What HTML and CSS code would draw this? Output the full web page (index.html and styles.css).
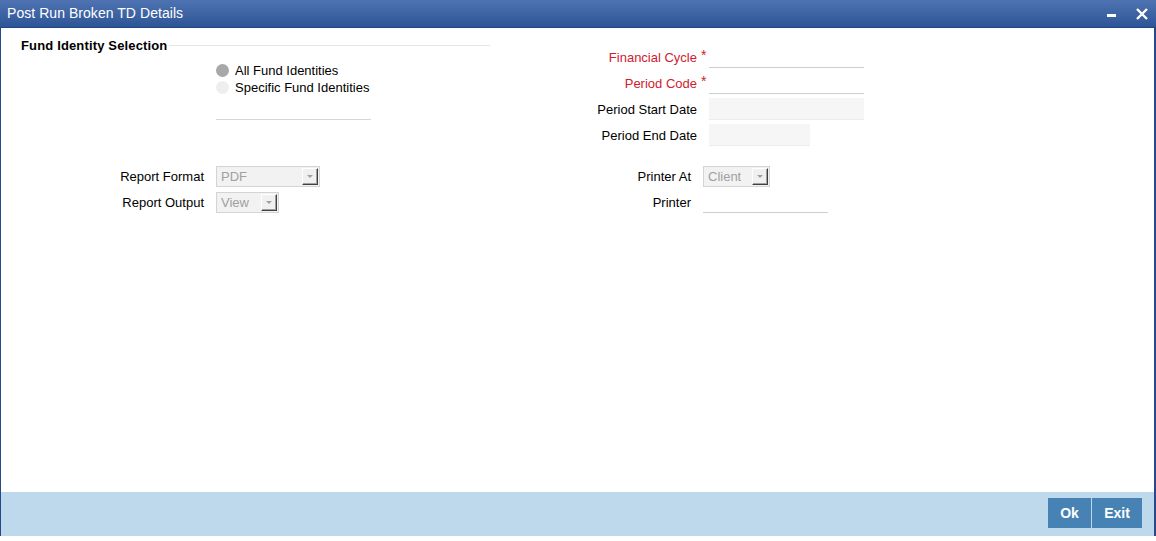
FILE: index.html
```html
<!DOCTYPE html>
<html>
<head>
<meta charset="utf-8">
<link rel="stylesheet" href="styles.css">
</head>
<body>
<div class="window">
  <div class="titlebar">
    <span class="title">Post Run Broken TD Details</span>
    <div class="controls">
      <svg class="ctl" width="12" height="12" viewBox="0 0 12 12"><rect x="1" y="6" width="9" height="3" fill="#fff"/></svg>
      <svg class="ctl" width="14" height="14" viewBox="0 0 14 14"><path d="M2 2 L12 12 M12 2 L2 12" stroke="#fff" stroke-width="2.4" fill="none"/></svg>
    </div>
  </div>
  <div class="content">
    <div class="top">
      <div class="left">
        <div class="legend-row">
          <span class="legend">Fund Identity Selection</span>
          <span class="legend-line"></span>
        </div>
        <div class="radios">
          <div class="radio-row"><span class="radio checked"></span><span>All Fund Identities</span></div>
          <div class="radio-row"><span class="radio"></span><span>Specific Fund Identities</span></div>
        </div>
        <div class="under-line"></div>
      </div>
      <div class="right">
        <div class="frow"><span class="flabel req">Financial Cycle</span><span class="star">*</span><span class="input line"></span></div>
        <div class="frow"><span class="flabel req">Period Code</span><span class="star">*</span><span class="input line"></span></div>
        <div class="frow"><span class="flabel">Period Start Date</span><span class="star"></span><span class="input box"></span></div>
        <div class="frow"><span class="flabel">Period End Date</span><span class="star"></span><span class="input box short"></span></div>
      </div>
    </div>
    <div class="bottom">
      <div class="bleft">
        <div class="brow"><span class="blabel">Report Format</span><span class="select wide"><span class="sval">PDF</span><span class="sbtn"><span class="tri"></span></span></span></div>
        <div class="brow"><span class="blabel">Report Output</span><span class="select narrow"><span class="sval">View</span><span class="sbtn"><span class="tri"></span></span></span></div>
      </div>
      <div class="bright">
        <div class="brow"><span class="blabel2">Printer At</span><span class="select client"><span class="sval">Client</span><span class="sbtn"><span class="tri"></span></span></span></div>
        <div class="brow"><span class="blabel2">Printer</span><span class="pinput"></span></div>
      </div>
    </div>
  </div>
  <div class="footer">
    <button class="btn ok">Ok</button>
    <button class="btn exit">Exit</button>
  </div>
</div>
</body>
</html>
```
FILE: styles.css
```css
html, body {
  margin: 0;
  padding: 0;
  background: #fff;
}
body {
  width: 1156px;
  height: 541px;
  overflow: hidden;
  font-family: "Liberation Sans", Arial, sans-serif;
  font-size: 13px;
  color: #000;
}
.window {
  width: 1156px;
  height: 536px;
  box-sizing: border-box;
  border-left: 1px solid #27498a;
  border-right: 2px solid #27498a;
  display: flex;
  flex-direction: column;
}
.titlebar {
  height: 28px;
  flex: none;
  background: linear-gradient(#4f73b2, #2d5596);
  display: flex;
  align-items: center;
  justify-content: space-between;
  padding: 0 7px 0 7px;
  margin-left: -1px;
  margin-right: -2px;
  border-bottom: 1px solid #234683;
  box-sizing: border-box;
}
.title {
  color: #fff;
  font-size: 14px;
  letter-spacing: 0.05px;
  position: relative;
  top: -1px;
}
.controls {
  display: flex;
  align-items: center;
  gap: 17px;
}
.ctl { display: block; }
.content {
  flex: 1;
  background: #fff;
}
.top {
  display: flex;
}
.left {
  width: 469px;
  margin-left: 20px;
  padding-top: 9px;
}
.legend-row {
  display: flex;
  align-items: center;
  height: 16px;
}
.legend {
  font-weight: bold;
  font-size: 13px;
  letter-spacing: 0.15px;
  margin-right: 2px;
}
.legend-line {
  flex: 1;
  border-top: 1px solid #e6e6e6;
}
.radios {
  margin-left: 195px;
  margin-top: 9px;
}
.radio-row {
  display: flex;
  align-items: center;
  height: 17px;
  gap: 6px;
}
.radio {
  width: 13px;
  height: 13px;
  border-radius: 50%;
  background: #eeeeee;
}
.radio.checked {
  background: #a8a8a8;
}
.under-line {
  margin-left: 195px;
  margin-top: 23px;
  width: 155px;
  border-top: 1px solid #d6d6d6;
}
.right {
  margin-left: 71px;
  padding-top: 16px;
}
.frow {
  display: flex;
  align-items: center;
  height: 26px;
}
.flabel {
  width: 136px;
  text-align: right;
}
.flabel.req {
  color: #d0202e;
}
.star {
  width: 12px;
  color: #d0202e;
  font-size: 14px;
  align-self: flex-start;
  padding-top: 3px;
  padding-left: 4px;
  box-sizing: border-box;
  height: 26px;
}
.input {
  width: 155px;
  height: 22px;
  box-sizing: border-box;
  display: block;
}
.input.line {
  border-bottom: 1px solid #cfcfcf;
}
.input.box {
  background: #f6f6f6;
  border-bottom: 1px solid #ececec;
}
.input.short {
  width: 101px;
}
.bottom {
  display: flex;
  margin-top: 18px;
}
.bleft {
  width: 560px;
  flex: none;
}
.brow {
  display: flex;
  align-items: center;
  height: 20px;
  margin-bottom: 6px;
}
.blabel {
  width: 203px;
  text-align: right;
  margin-right: 12px;
}
.blabel2 {
  width: 130px;
  text-align: right;
  margin-right: 12px;
}
.select {
  height: 21px;
  box-sizing: border-box;
  border: 1px solid #d4d4d4;
  background: #f2f2f2;
  display: flex;
  align-items: center;
  justify-content: space-between;
  padding: 0 1px 0 4px;
  color: #a0a0a0;
}
.select.wide { width: 104px; }
.select.narrow { width: 63px; }
.select.client { width: 67px; }
.sbtn {
  width: 16px;
  height: 17px;
  box-sizing: border-box;
  background: #f0f0f0;
  border-top: 1px solid #ffffff;
  border-left: 1px solid #ffffff;
  border-right: 1px solid #404040;
  border-bottom: 1px solid #404040;
  box-shadow: inset -1px -1px 0 #a0a0a0;
  display: flex;
  align-items: center;
  justify-content: center;
}
.tri {
  width: 0;
  height: 0;
  border-left: 3px solid transparent;
  border-right: 3px solid transparent;
  border-top: 3px solid #a0a0a0;
}
.pinput {
  width: 125px;
  height: 21px;
  box-sizing: border-box;
  border-bottom: 1px solid #cfcfcf;
}
.footer {
  height: 44px;
  flex: none;
  background: #bfd9ec;
  display: flex;
  justify-content: flex-end;
  align-items: flex-start;
  padding: 6px 12px 0 0;
  box-sizing: border-box;
  gap: 1px;
}
.btn {
  height: 30px;
  border: none;
  margin: 0;
  background: #4682b4;
  color: #fff;
  font-family: "Liberation Sans", Arial, sans-serif;
  font-weight: bold;
  font-size: 14px;
  padding: 0;
}
.btn.ok { width: 43px; }
.btn.exit { width: 50px; }
```
